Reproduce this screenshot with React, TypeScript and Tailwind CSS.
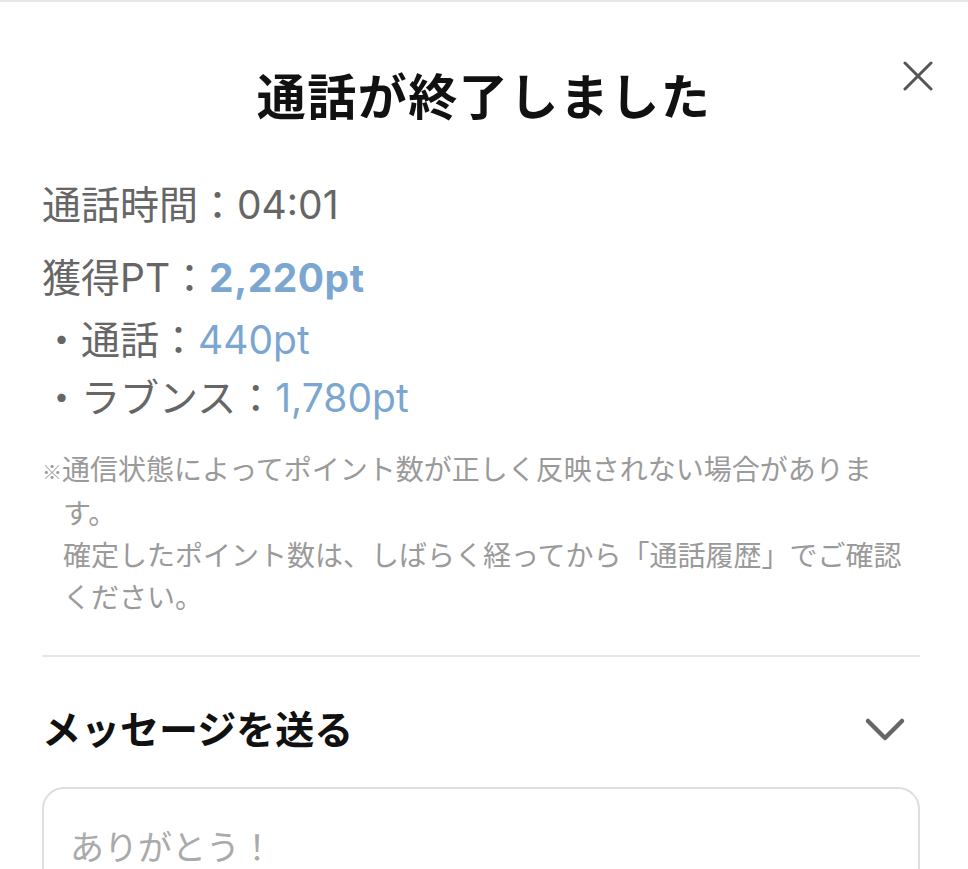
import React from "react";

const App: React.FC = () => {
  return (
    <div
      className="w-[968px] h-[869px] overflow-hidden bg-white border-t-2 border-[#e6e6e6]"
      style={{ fontFamily: 'Inter, "Noto Sans CJK JP", sans-serif' }}
    >
      <div className="relative pl-[42px] pr-[48px]">
        {/* header */}
        <div className="flex justify-center pt-[64px] pl-[6px]">
          <h1 className="text-[49px] leading-[64px] font-bold text-[#111] tracking-[1.5px]">
            通話が終了しました
          </h1>
        </div>
        <button className="absolute right-[30px] top-[54px] w-[40px] h-[40px] flex items-center justify-center text-[#555]">
          <svg width="30" height="30" viewBox="0 0 30 30" fill="none" stroke="currentColor" strokeWidth="3" strokeLinecap="round">
            <path d="M2 2 L28 28 M28 2 L2 28" />
          </svg>
        </button>

        {/* result */}
        <div className="mt-[50px] text-[#666] text-[39px]">
          <p className="leading-[50px]">通話時間：04:01</p>
          <p className="leading-[50px] mt-[23px]">
            獲得PT：<span className="font-bold text-[#7ba6d0] tracking-[0.5px]">2,220pt</span>
          </p>
          <p className="leading-[50px] mt-[12px]">
            ・通話：<span className="text-[#7ba6d0]">440pt</span>
          </p>
          <p className="leading-[50px] mt-[8px]">
            ・ラブンス：<span className="text-[#7ba6d0]">1,780pt</span>
          </p>
        </div>

        {/* note */}
        <div className="mt-[26px] text-[28px] leading-[42px] text-[#9a9a9a] [text-spacing-trim:space-all]">
          <p className="pl-[21px] -indent-[21px]">
            <span className="text-[20px]" style={{ fontFamily: '"Noto Sans CJK JP", sans-serif' }}>※</span>
            通信状態によってポイント数が正しく反映されない場合があります。
          </p>
          <p className="pl-[21px]">確定したポイント数は、しばらく経ってから「通話履歴」でご確認ください。</p>
        </div>

        <div className="mt-[36px] h-[2px] bg-[#e6e6e6]" />

        {/* message */}
        <div className="flex items-center justify-between mt-[48px]">
          <h2 className="text-[39px] leading-[50px] font-bold text-[#111]">メッセージを送る</h2>
          <svg className="mr-[14px]" width="42" height="28" viewBox="0 0 42 28" fill="none" stroke="#666" strokeWidth="4.5" strokeLinecap="round" strokeLinejoin="round">
            <path d="M4 5 L21 22 L38 5" />
          </svg>
        </div>

        <div className="mt-[32px] h-[140px] rounded-[22px] border-2 border-[#dedede] px-[26px] pt-[36px]">
          <p className="text-[34px] leading-[46px] text-[#aaa]">ありがとう！</p>
        </div>
      </div>
    </div>
  );
};

export default App;
